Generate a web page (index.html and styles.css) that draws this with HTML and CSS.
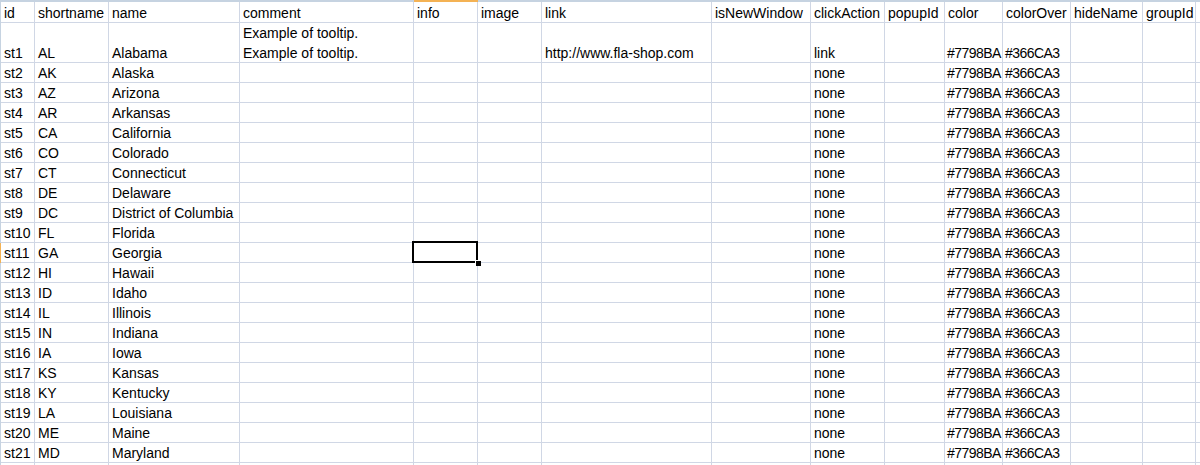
FILE: index.html
```html
<!DOCTYPE html>
<html>
<head>
<meta charset="utf-8">
<link rel="stylesheet" href="styles.css">
</head>
<body>
<div class="sheet" id="sheet">
  <div class="row">
    <div class="edge corner"></div>
    <div class="edge"></div><div class="edge"></div><div class="edge"></div><div class="edge"></div>
    <div class="edge active"></div>
    <div class="edge"></div><div class="edge"></div><div class="edge"></div><div class="edge"></div>
    <div class="edge"></div><div class="edge"></div><div class="edge"></div><div class="edge"></div>
    <div class="edge"></div><div class="edge"></div>
  </div>
  <div class="row">
    <div class="edge"></div>
    <div class="c">id</div><div class="c">shortname</div><div class="c">name</div><div class="c">comment</div>
    <div class="c">info</div><div class="c">image</div><div class="c">link</div><div class="c">isNewWindow</div>
    <div class="c">clickAction</div><div class="c">popupId</div><div class="c">color</div><div class="c">colorOver</div>
    <div class="c">hideName</div><div class="c">groupId</div><div class="c"></div>
  </div>
  <div class="row">
    <div class="edge"></div>
    <div class="c">st1</div><div class="c">AL</div><div class="c">Alabama</div>
    <div class="c multi"><div>Example of tooltip.</div><div>Example of tooltip.</div></div>
    <div class="c"></div><div class="c"></div><div class="c">http://www.fla-shop.com</div><div class="c"></div>
    <div class="c">link</div><div class="c"></div><div class="c hex">#7798BA</div><div class="c hex">#366CA3</div>
    <div class="c"></div><div class="c"></div><div class="c"></div>
  </div>
</div>
<script src="app.js"></script>
</body>
</html>
```

FILE: app.js
```js
const states = [
  ["st2","AK","Alaska"],["st3","AZ","Arizona"],["st4","AR","Arkansas"],["st5","CA","California"],
  ["st6","CO","Colorado"],["st7","CT","Connecticut"],["st8","DE","Delaware"],["st9","DC","District of Columbia"],
  ["st10","FL","Florida"],["st11","GA","Georgia"],["st12","HI","Hawaii"],["st13","ID","Idaho"],
  ["st14","IL","Illinois"],["st15","IN","Indiana"],["st16","IA","Iowa"],["st17","KS","Kansas"],
  ["st18","KY","Kentucky"],["st19","LA","Louisiana"],["st20","ME","Maine"],["st21","MD","Maryland"]
];
const sheet = document.getElementById("sheet");
function cell(text, cls) {
  const d = document.createElement("div");
  d.className = cls || "c";
  d.textContent = text || "";
  return d;
}
states.forEach(([id, sn, name]) => {
  const row = document.createElement("div");
  row.className = "row";
  const sel = id === "st11";
  row.appendChild(cell("", sel ? "edge active" : "edge"));
  row.appendChild(cell(id));
  row.appendChild(cell(sn));
  row.appendChild(cell(name));
  row.appendChild(cell(""));
  row.appendChild(cell("", sel ? "c selected" : "c"));
  row.appendChild(cell(""));
  row.appendChild(cell(""));
  row.appendChild(cell(""));
  row.appendChild(cell("none"));
  row.appendChild(cell(""));
  row.appendChild(cell("#7798BA", "c hex"));
  row.appendChild(cell("#366CA3", "c hex"));
  row.appendChild(cell(""));
  row.appendChild(cell(""));
  row.appendChild(cell(""));
  sheet.appendChild(row);
});
const last = document.createElement("div");
last.className = "row";
last.appendChild(cell("", "edge"));
for (let i = 0; i < 15; i++) last.appendChild(cell(""));
sheet.appendChild(last);
```

FILE: styles.css
```css
html, body {
  margin: 0;
  padding: 0;
  background: #ffffff;
  overflow: hidden;
}
.sheet {
  display: grid;
  grid-template-columns: 1px 34px 74px 131px 174px 64px 64px 170px 99px 74px 60px 58px 68px 72px 53px minmax(0, 1fr);
  grid-template-rows: 2px 21px 40px repeat(21, 20px);
  font-family: "Liberation Sans", Arial, sans-serif;
  font-size: 14px;
  color: #000;
  width: 100%;
}
.row {
  display: contents;
}
.edge {
  background: #c6d3e1;
}
.edge.active {
  background: #f4b254;
}
.c {
  box-sizing: border-box;
  border-right: 1px solid #d0d7e5;
  border-bottom: 1px solid #d0d7e5;
  padding: 0 3px 1px 3px;
  line-height: 16px;
  display: flex;
  flex-direction: column;
  justify-content: flex-end;
  white-space: nowrap;
  overflow: visible;
  position: relative;
  min-width: 0;
}
.c.multi {
  gap: 4px;
}
.c.hex {
  letter-spacing: -0.55px;
  padding-left: 2px;
}
.c.selected::before {
  content: "";
  position: absolute;
  left: -2px;
  top: -2px;
  right: -1px;
  bottom: -1px;
  border: 2px solid #000;
  z-index: 2;
}
.c.selected::after {
  content: "";
  position: absolute;
  right: -4px;
  bottom: -4px;
  width: 5px;
  height: 5px;
  background: #000;
  box-shadow: -1px -1px 0 0 #fff;
  z-index: 3;
}
```
